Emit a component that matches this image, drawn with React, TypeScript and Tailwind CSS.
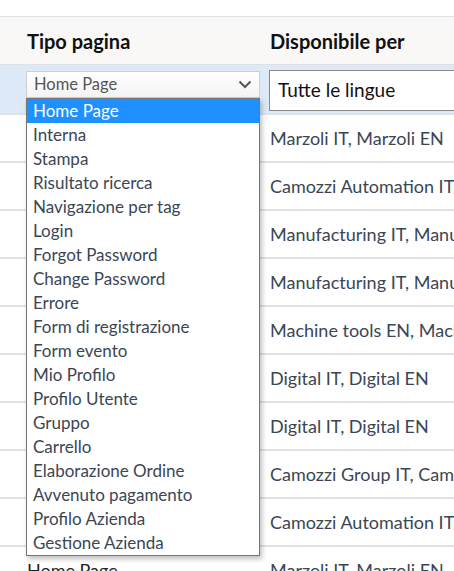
import React from 'react';

const pageTypes = [
  'Home Page',
  'Interna',
  'Stampa',
  'Risultato ricerca',
  'Navigazione per tag',
  'Login',
  'Forgot Password',
  'Change Password',
  'Errore',
  'Form di registrazione',
  'Form evento',
  'Mio Profilo',
  'Profilo Utente',
  'Gruppo',
  'Carrello',
  'Elaborazione Ordine',
  'Avvenuto pagamento',
  'Profilo Azienda',
  'Gestione Azienda',
];

// type column is hidden under the open list except for the last row
const rows = [
  { type: '', sites: 'Marzoli IT, Marzoli EN' },
  { type: '', sites: 'Camozzi Automation IT, Camozzi Automation EN' },
  { type: '', sites: 'Manufacturing IT, Manufacturing EN' },
  { type: '', sites: 'Manufacturing IT, Manufacturing EN' },
  { type: '', sites: 'Machine tools EN, Machine tools IT' },
  { type: '', sites: 'Digital IT, Digital EN' },
  { type: '', sites: 'Digital IT, Digital EN' },
  { type: '', sites: 'Camozzi Group IT, Camozzi Group EN' },
  { type: '', sites: 'Camozzi Automation IT, Camozzi Automation EN' },
  { type: 'Home Page', sites: 'Marzoli IT, Marzoli EN' },
];

function SelectOpen() {
  return (
    <div className="relative w-[234px]">
      <div className="flex h-[27px] items-center justify-between border border-[#cfcfcf] bg-gradient-to-b from-white to-[#f4f4f4] pl-[7px] pr-[6px] text-[16.5px] text-[#555]">
        <span>Home Page</span>
        <svg width="14" height="9" viewBox="0 0 14 9" className="mr-px">
          <path d="M1.5 1.5 L7 7 L12.5 1.5" fill="none" stroke="#555" strokeWidth="2" />
        </svg>
      </div>
      {/* open option list */}
      <ul className="absolute left-0 top-[27px] z-10 w-[234px] border border-[#767676] bg-white shadow-[2px_3px_5px_rgba(0,0,0,0.25)]">
        {pageTypes.map((t, i) => (
          <li
            key={t}
            className={
              i === 0
                ? 'flex h-6 items-center bg-[#1e90ff] pl-[6px] text-[17px] text-white'
                : 'flex h-6 items-center pl-[6px] text-[17px] text-[#3b4654]'
            }
          >
            {t}
          </li>
        ))}
      </ul>
    </div>
  );
}

export default function App() {
  return (
    <div className="h-[571px] w-[454px] overflow-hidden bg-white font-['Lato',sans-serif]">
      <div className="h-4" />

      {/* Header */}
      <div className="flex h-[49px] items-center border-y border-[#dee2e6] bg-[#f9f8f6] text-[20px] font-bold text-[#111]">
        <div className="w-[270px] shrink-0 pl-[27px]">Tipo pagina</div>
        <div className="whitespace-nowrap">Disponibile per</div>
      </div>

      {/* Filter row */}
      <div className="relative z-10 flex h-[50px] border-b-2 border-[#dee2e6] bg-[#dde9f6]">
        <div className="w-[269px] shrink-0 pl-[26px] pt-[6px]">
          <SelectOpen />
        </div>
        <div className="flex-1 pt-[5px]">
          <div className="flex h-[41px] w-[200px] items-center border border-[#8a8a8a] bg-white pl-[8px] text-[19px] text-[#111]">
            Tutte le lingue
          </div>
        </div>
      </div>

      {/* Body rows */}
      {rows.map((r, i) => (
        <div key={i} className="flex h-[48px] items-center border-b-2 border-[#dee2e6] text-[18px] text-[#3b4654]">
          <div className="w-[270px] shrink-0 pl-[27px] text-[#222]">{r.type}</div>
          <div className="whitespace-nowrap">{r.sites}</div>
        </div>
      ))}
    </div>
  );
}
